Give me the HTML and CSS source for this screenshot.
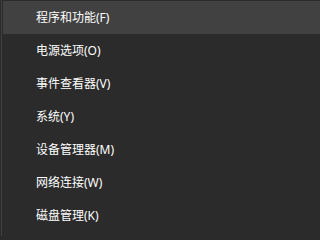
FILE: index.html
```html
<!DOCTYPE html>
<html lang="zh-CN">
<head>
<meta charset="utf-8">
<link rel="stylesheet" href="styles.css">
</head>
<body>
<div class="menu">
  <ul class="items">
    <li class="item active">程序和功能(F)</li>
    <li class="item">电源选项(O)</li>
    <li class="item">事件查看器(V)</li>
    <li class="item">系统(Y)</li>
    <li class="item">设备管理器(M)</li>
    <li class="item">网络连接(W)</li>
    <li class="item">磁盘管理(K)</li>
  </ul>
</div>
</body>
</html>
```
FILE: styles.css
```css
html, body {
  margin: 0;
  padding: 0;
  background: #2b2b2b;
  min-height: 236px;
  overflow: hidden;
}
.menu {
  min-height: 236px;
  padding-left: 1px;
  box-sizing: border-box;
}
.items {
  list-style: none;
  margin: 0;
  padding: 1px 0 0 0;
  border-left: 1px solid #404040;
  min-height: 236px;
  box-sizing: border-box;
}
.item {
  height: 33px;
  display: flex;
  align-items: center;
  padding-left: 33px;
  margin-left: 1px;
  padding-top: 1px;
  box-sizing: border-box;
  color: #ffffff;
  font-family: "Noto Sans", "Noto Sans CJK SC", sans-serif;
  font-size: 12px;
  line-height: 1;
}
.item.active {
  background: #414141;
}
```
